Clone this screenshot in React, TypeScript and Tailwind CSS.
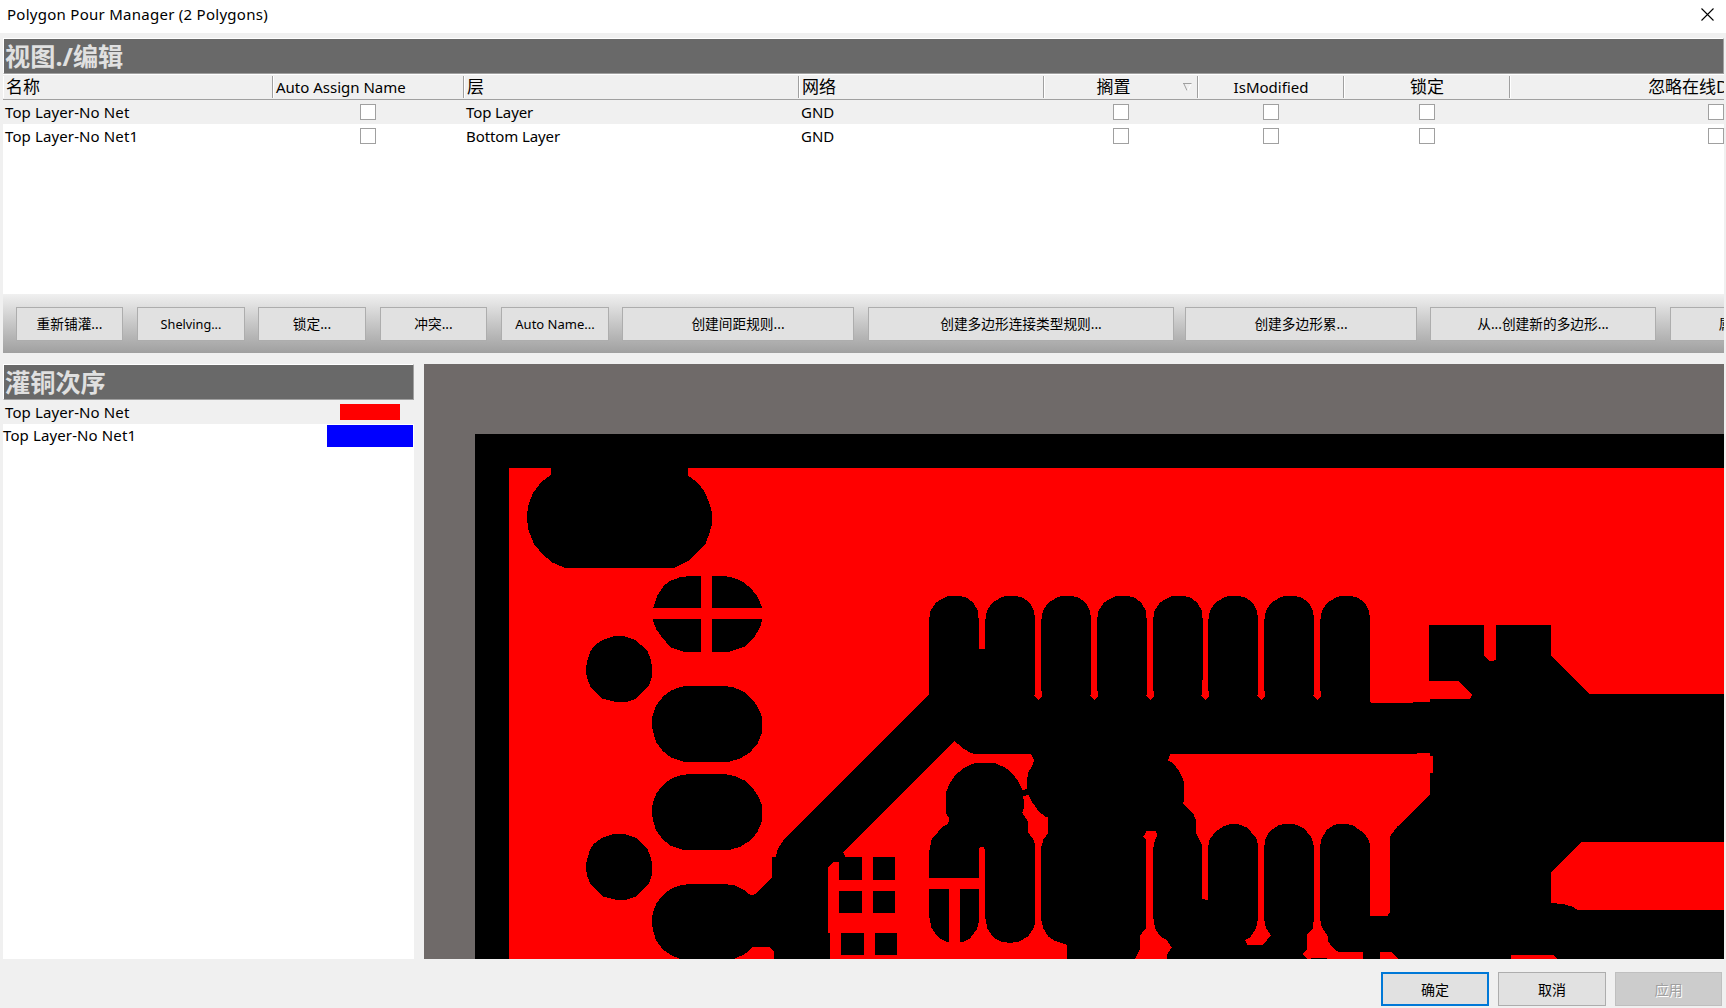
import React from "react";

const COLUMNS =
  "grid grid-cols-[270px_191px_335px_245px_154px_146px_166px_412px]";

const headers = [
  { text: "名称", cjk: true, align: "left" },
  { text: "Auto Assign Name", cjk: false, align: "left" },
  { text: "层", cjk: true, align: "left" },
  { text: "网络", cjk: true, align: "left" },
  { text: "搁置", cjk: true, align: "center", sorted: true },
  { text: "IsModified", cjk: false, align: "center" },
  { text: "锁定", cjk: true, align: "center" },
  { text: "忽略在线DRC冲突", cjk: true, align: "center" },
];

const polygons = [
  { name: "Top Layer-No Net", layer: "Top Layer", net: "GND" },
  { name: "Top Layer-No Net1", layer: "Bottom Layer", net: "GND" },
];

const tools = [
  { text: "重新铺灌...", box: "w-[107px] text-[13.7px]" },
  { text: "Shelving...", box: "ml-[14px] w-[108px] text-[12.7px]" },
  { text: "锁定...", box: "ml-[13px] w-[108px] text-[13.7px]" },
  { text: "冲突...", box: "ml-[14px] w-[107px] text-[13.7px]" },
  { text: "Auto Name...", box: "ml-[14px] w-[108px] text-[13px]" },
  { text: "创建间距规则...", box: "ml-[13px] w-[232px] text-[13.7px]" },
  { text: "创建多边形连接类型规则...", box: "ml-[14px] w-[306px] text-[13.7px]" },
  { text: "创建多边形累...", box: "ml-[11px] w-[232px] text-[13.7px]" },
  { text: "从...创建新的多边形...", box: "ml-[13px] w-[226px] text-[13.7px]" },
  { text: "属性...", box: "ml-[14px] w-[136px] text-[13.7px]" },
];

function Check() {
  return <span className="block size-4 border border-[#a0a0a0] bg-white" />;
}

function SectionTitle({ children }: { children: string }) {
  return (
    <div className="flex h-9 items-center border border-t-white border-r-[#a0a0a0] border-b-[#a0a0a0] border-l-white bg-[#696969] pt-[2px] pl-px text-[25.2px] leading-none font-bold whitespace-nowrap text-[#e0e0e0]">
      {children}
    </div>
  );
}

function SortMark() {
  return (
    <svg className="absolute top-2 right-[6px]" width="9" height="8" fill="none">
      <path d="M0 .5H8.5M.8 .5L4 7.5" stroke="#a0a0a0" />
      <path d="M8 1.2L4.8 7.5" stroke="#fff" />
    </svg>
  );
}

function HeaderRow() {
  return (
    <div className={`${COLUMNS} h-[26px] border-t border-b border-t-white border-b-[#a0a0a0] bg-[#f0f0f0]`}>
      {headers.map((h) => (
        <div key={h.text} className="relative py-px">
          <div
            className={`flex h-[22px] items-center border-r border-l border-r-[#a0a0a0] border-l-white whitespace-nowrap ${
              h.align === "center" ? "justify-center" : "pl-[2px]"
            } ${h.sorted ? "pr-[15px]" : ""} ${h.cjk ? "text-[17px]" : "text-[15px]"}`}
          >
            {h.text}
          </div>
          {h.sorted && <SortMark />}
        </div>
      ))}
    </div>
  );
}

const oval =
  "95,193 98,165 109,135 130,109 152,92 180,81 208,77 312,77 343,83 375,97 400,122 414,142 426,170 426,218 412,252 390,277 360,296 327,305 192,305 152,292 128,273 108,246 99,215";

const round =
  "-100,0 -96,-22 -87,-52 -75,-70 -50,-88 -12,-100 12,-100 50,-88 85,-55 95,-30 99,-10 99,23 90,50 51,88 23,98 -10,98 -50,88 -86,52 -96,25";

const fingers = [87, 256, 424, 591, 759, 925, 1093, 1261];
const gaps = [405, 573, 740, 906, 1074, 1242];

function Board() {
  return (
    <svg
      className="block"
      width="1300"
      height="595"
      viewBox="424 364 1300 595"
      shapeRendering="crispEdges"
    >
      <rect x="424" y="364" width="1300" height="595" fill="#6f6a69" />
      <rect x="475" y="434" width="1249" height="525" />
      <rect x="509" y="468" width="1215" height="491" fill="#f00" />

      <g transform="translate(420 360) scale(.333333)">
        <polygon points="390,320 393,328 393,345 365,365 340,397 325,435 320,472 326,512 342,552 368,583 396,607 435,624 762,624 805,603 832,578 857,550 868,520 875,495 876,460 870,435 855,397 832,367 802,345 804,340 804,320" />
        <polygon points="700,743 712,706 732,677 751,662 780,652 808,648 843,648 843,743" />
        <polygon points="876,648 911,648 940,653 972,667 997,690 1014,712 1026,743 876,743" />
        <polygon points="697,777 843,777 843,876 795,876 752,862 730,837 710,810" />
        <polygon points="876,777 1027,777 1020,803 1000,836 972,861 926,876 876,876" />
        <polygon points={round} transform="translate(597 928)" />
        <polygon points={round} transform="translate(597 1521)" />
      </g>

      <g transform="translate(620 660) scale(.333333)">
        <polygon points={oval} />
        <polygon points={oval} transform="translate(0 265)" />
        <polygon points="927,104 491,540 473,568 467,591 456,591 456,654 408,702 392,706 375,692 343,676 312,672 208,672 180,676 152,687 130,704 109,730 98,760 95,788 99,810 108,841 128,868 152,885 180,897 342,897 375,882 397,861 448,861 462,875 462,897 1140,897 1140,104" />
      </g>

      <g transform="translate(900 570) scale(.333333)">
        {fingers.map((x) => (
          <polygon
            key={x}
            transform={`translate(${x} 0)`}
            points="0,390 0,150 5,121 22,97 48,82 63,77 88,77 112,83 132,97 146,121 149,150 149,390"
          />
        ))}
        <rect x="87" y="237" width="318" height="160" />
        <polygon points="87,375 1410,372 1405,385 1413,399 1413,552 87,552" />
        {gaps.map((x) => (
          <polygon
            key={x}
            fill="#f00"
            transform={`translate(${x} 0)`}
            points="0,330 19,330 19,362 22,362 22,380 11,390 -2,377 0,374"
          />
        ))}
      </g>

      <rect x="1000" y="720" width="371" height="239" />

      <g transform="translate(1366 600) scale(.333333)">
        <polygon points="0,309 141,309 141,306 192,306 192,297 312,297 318,285 278,243 189,243 189,75 354,75 354,167 370,183 382,182 390,180 390,75 555,75 555,167 670,282 1074,282 1074,726 648,726 555,818 555,909 590,912 617,919 635,930 1074,930 1074,1077 575,1077 562,1065 435,1065 435,1077 97,1077 77,1056 42,1056 42,1077 -9,1077 -9,948 64,948 72,936 72,740 72,709 92,682 192,585 192,519 201,519 201,468 192,468 192,459 153,459 153,462 0,462" />
      </g>

      <g transform="translate(1000 740) scale(.333333)" fill="#f00">
        <polygon points="511,42 1251,42 1251,39 1290,39 1290,48 1299,48 1299,99 1290,99 1290,165 1190,262 1170,289 1170,320 1167,320 1167,492 1170,492 1170,516 1162,528 1110,528 1110,315 1104,295 1090,278 1060,257 1040,251 1015,251 1000,256 980,270 965,295 960,320 960,535 965,560 983,588 985,605 995,620 1015,636 1089,636 1089,657 981,657 981,654 933,654 933,657 922,657 909,642 921,630 921,585 938,567 942,535 942,320 936,295 915,268 890,254 860,251 835,256 808,275 796,298 792,325 792,535 797,562 813,587 788,614 742,614 735,601 750,592 768,565 774,535 774,315 768,292 740,262 712,252 690,252 668,260 645,277 628,300 624,325 624,482 606,476 606,315 588,278 588,240 580,222 549,190 552,185 552,125 540,97 520,70 504,62" />
        <polygon points="440,273 466,273 471,280 471,290 465,298 460,325 460,535 465,565 482,590 500,600 515,623 503,640 500,657 405,657 420,627 420,586 438,565 438,298 430,290" />
        <polygon points="0,42 93,42 102,60 98,75 85,97 80,125 80,147 68,150 52,120 35,98 15,82 0,77" />
        <polygon points="70,168 86,165 95,185 115,212 135,230 144,233 144,280 130,298 123,325 123,535 130,565 145,590 165,603 201,615 201,657 0,657 0,604 30,609 60,604 85,588 100,565 105,550 105,315 100,297 84,278 84,245 66,218 72,205" />
      </g>

      <g transform="translate(620 660) scale(.333333)">
        <polygon
          fill="#f00"
          points="1004,243 1025,262 1050,278 1065,282 1140,282 1140,317 1125,309 1065,309 1035,322 1008,343 990,368 978,397 978,458 987,475 985,492 968,500 935,538 928,572 928,654 1077,654 1077,565 1080,561 1090,561 1095,570 1095,770 1102,805 1120,832 1140,844 1140,897 630,897 630,819 624,819 624,622 641,606 657,606 657,660 726,660 726,591 676,591 670,578"
        />
        <rect x="759" y="591" width="66" height="69" />
        <rect x="657" y="693" width="69" height="66" />
        <rect x="759" y="693" width="66" height="66" />
        <rect x="663" y="819" width="69" height="66" />
        <rect x="765" y="819" width="66" height="66" />
        <polygon points="928,687 987,687 987,846 978,845 955,832 935,805 928,770" />
        <polygon points="1020,687 1077,687 1077,785 1070,808 1050,835 1030,845 1020,846" />
      </g>
    </svg>
  );
}

export default function App() {
  return (
    <div className="flex h-[1008px] w-[1726px] flex-col overflow-hidden bg-[#f0f0f0] font-['Noto_Sans','Noto_Sans_CJK_SC',sans-serif] text-[15px] text-black">
      <header className="flex h-[33px] shrink-0 items-center justify-between bg-white pr-[12px] pb-[4px] pl-[7px]">
        <h1 className="text-[15px] tracking-[0.27px]">Polygon Pour Manager (2 Polygons)</h1>
        <svg width="13" height="13" fill="none" stroke="#000" strokeWidth="1.1">
          <path d="M.5 .5l12 12M12.5 .5l-12 12" />
        </svg>
      </header>

      <section className="mt-[5px] ml-[3px] h-[256px] w-[1721px] shrink-0 overflow-hidden bg-white">
        <SectionTitle>视图./编辑</SectionTitle>
        <HeaderRow />
        {polygons.map((p, i) => (
          <div
            key={p.name}
            className={`${COLUMNS} h-6 items-center whitespace-nowrap ${i === 0 ? "bg-[#f0f0f0]" : "bg-white"}`}
          >
            <span className="pl-[2px] tracking-[0.12px]">{p.name}</span>
            <span className="flex justify-center pr-px">
              <Check />
            </span>
            <span className="pl-[2px] tracking-[-0.1px]">{p.layer}</span>
            <span className="pl-[2px]">{p.net}</span>
            {[0, 1, 2, 3].map((k) => (
              <span key={k} className="flex justify-center">
                <Check />
              </span>
            ))}
          </div>
        ))}
      </section>

      <div className="ml-[3px] flex h-[59px] w-[1721px] shrink-0 items-start overflow-hidden bg-linear-to-b from-[#f0f0f0] to-[#a0a0a0] pt-[13px] pl-[13px]">
        {tools.map((t) => (
          <button
            key={t.text}
            className={`h-[34px] shrink-0 border border-[#adadad] bg-[#e1e1e1] pt-px whitespace-nowrap ${t.box}`}
          >
            {t.text}
          </button>
        ))}
      </div>

      <main className="mt-[11px] ml-[3px] flex h-[595px] w-[1721px] shrink-0 gap-[10px]">
        <aside className="w-[411px] bg-white">
          <SectionTitle>灌铜次序</SectionTitle>
          <div className="flex h-6 items-center justify-between bg-[#f0f0f0] pr-[14px] pl-[2px] tracking-[0.12px]">
            <span>Top Layer-No Net</span>
            <span className="h-4 w-[60px] bg-[#f00]" />
          </div>
          <div className="flex h-6 items-center justify-between pr-px tracking-[0.12px]">
            <span className="pb-[2px]">Top Layer-No Net1</span>
            <span className="h-[22px] w-[86px] bg-[#00f]" />
          </div>
        </aside>
        <Board />
      </main>

      <footer className="mt-[13px] flex h-[34px] shrink-0 justify-end gap-[9px] pr-[4px] text-[14px]">
        <button className="w-[108px] border-2 border-[#0078d7] bg-[#e1e1e1]">确定</button>
        <button className="w-[108px] border border-[#adadad] bg-[#e1e1e1]">取消</button>
        <button
          disabled
          className="w-[107px] border border-[#bfbfbf] bg-[#ccc] text-[#a0a0a0] [text-shadow:1px_1px_0_#fff]"
        >
          应用
        </button>
      </footer>
    </div>
  );
}
